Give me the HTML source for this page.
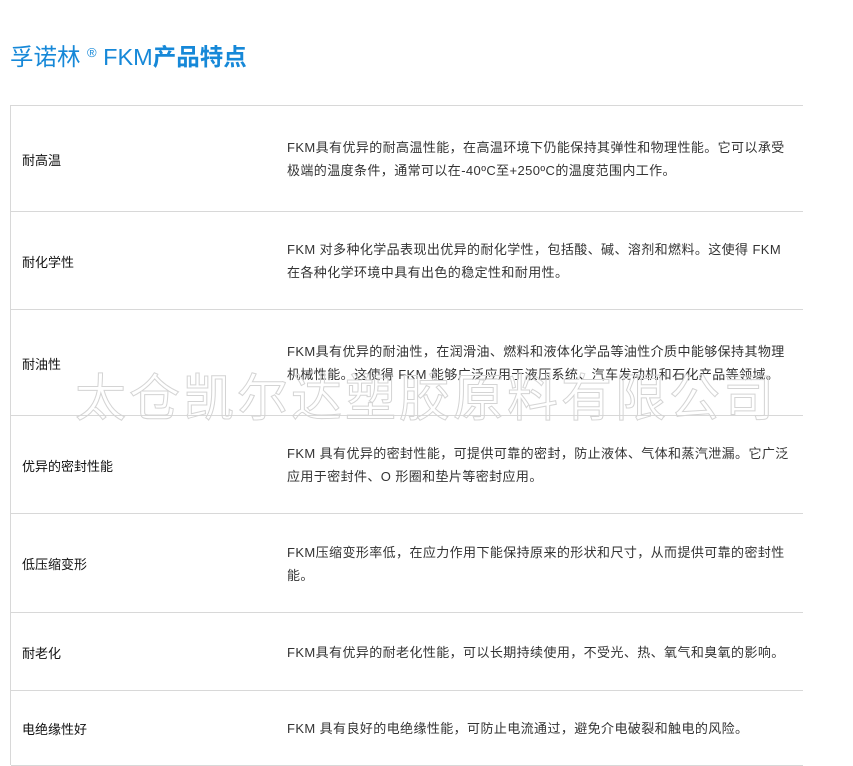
<!DOCTYPE html>
<html><head><meta charset="utf-8"><style>
body{margin:0;width:853px;height:760px;background:#fff;position:relative;overflow:hidden;font-family:"Liberation Sans","Noto Sans CJK SC",sans-serif;}
h1{position:absolute;left:10px;top:37px;margin:0;font-size:23.5px;font-weight:normal;color:#1688d8;line-height:32px;white-space:nowrap;}
h1 b{font-weight:bold;}
h1 sup{font-size:13px;vertical-align:8px;}
.tbl{position:absolute;left:10px;top:105px;width:792px;height:660px;border-left:1px solid #d8d8d8;}
.row{position:absolute;left:0;width:792px;border-top:1px solid #d8d8d8;}
.lab{position:absolute;left:11px;top:0;bottom:0;display:flex;align-items:center;font-size:13px;color:#111;}
.txt{position:absolute;left:276px;width:506px;top:0;bottom:0;display:flex;align-items:center;font-size:13px;letter-spacing:0.4px;color:#333;line-height:23px;}
.wm{position:absolute;left:75px;top:357px;font-size:51px;color:rgba(255,255,255,0);-webkit-text-stroke:1px #d4d4d4;letter-spacing:3px;white-space:nowrap;font-family:"Noto Sans CJK SC",sans-serif;}
</style></head><body>
<h1>孚诺林 <sup>®</sup> FKM<b>产品特点</b></h1>
<div class="tbl">
<div class="row" style="top:0;height:106px"><div class="lab">耐高温</div><div class="txt">FKM具有优异的耐高温性能，在高温环境下仍能保持其弹性和物理性能。它可以承受极端的温度条件，通常可以在-40ºC至+250ºC的温度范围内工作。</div></div>
<div class="row" style="top:106px;height:98px"><div class="lab">耐化学性</div><div class="txt">FKM 对多种化学品表现出优异的耐化学性，包括酸、碱、溶剂和燃料。这使得 FKM 在各种化学环境中具有出色的稳定性和耐用性。</div></div>
<div class="row" style="top:204px;height:106px"><div class="lab">耐油性</div><div class="txt">FKM具有优异的耐油性，在润滑油、燃料和液体化学品等油性介质中能够保持其物理机械性能。这使得 FKM 能够广泛应用于液压系统、汽车发动机和石化产品等领域。</div></div>
<div class="row" style="top:310px;height:98px"><div class="lab">优异的密封性能</div><div class="txt">FKM 具有优异的密封性能，可提供可靠的密封，防止液体、气体和蒸汽泄漏。它广泛应用于密封件、O 形圈和垫片等密封应用。</div></div>
<div class="row" style="top:408px;height:99px"><div class="lab">低压缩变形</div><div class="txt">FKM压缩变形率低，在应力作用下能保持原来的形状和尺寸，从而提供可靠的密封性能。</div></div>
<div class="row" style="top:507px;height:78px"><div class="lab">耐老化</div><div class="txt">FKM具有优异的耐老化性能，可以长期持续使用，不受光、热、氧气和臭氧的影响。</div></div>
<div class="row" style="top:585px;height:74px;border-bottom:1px solid #d8d8d8"><div class="lab">电绝缘性好</div><div class="txt">FKM 具有良好的电绝缘性能，可防止电流通过，避免介电破裂和触电的风险。</div></div>
</div>
<div class="wm">太仓凯尔达塑胶原料有限公司</div>
</body></html>
